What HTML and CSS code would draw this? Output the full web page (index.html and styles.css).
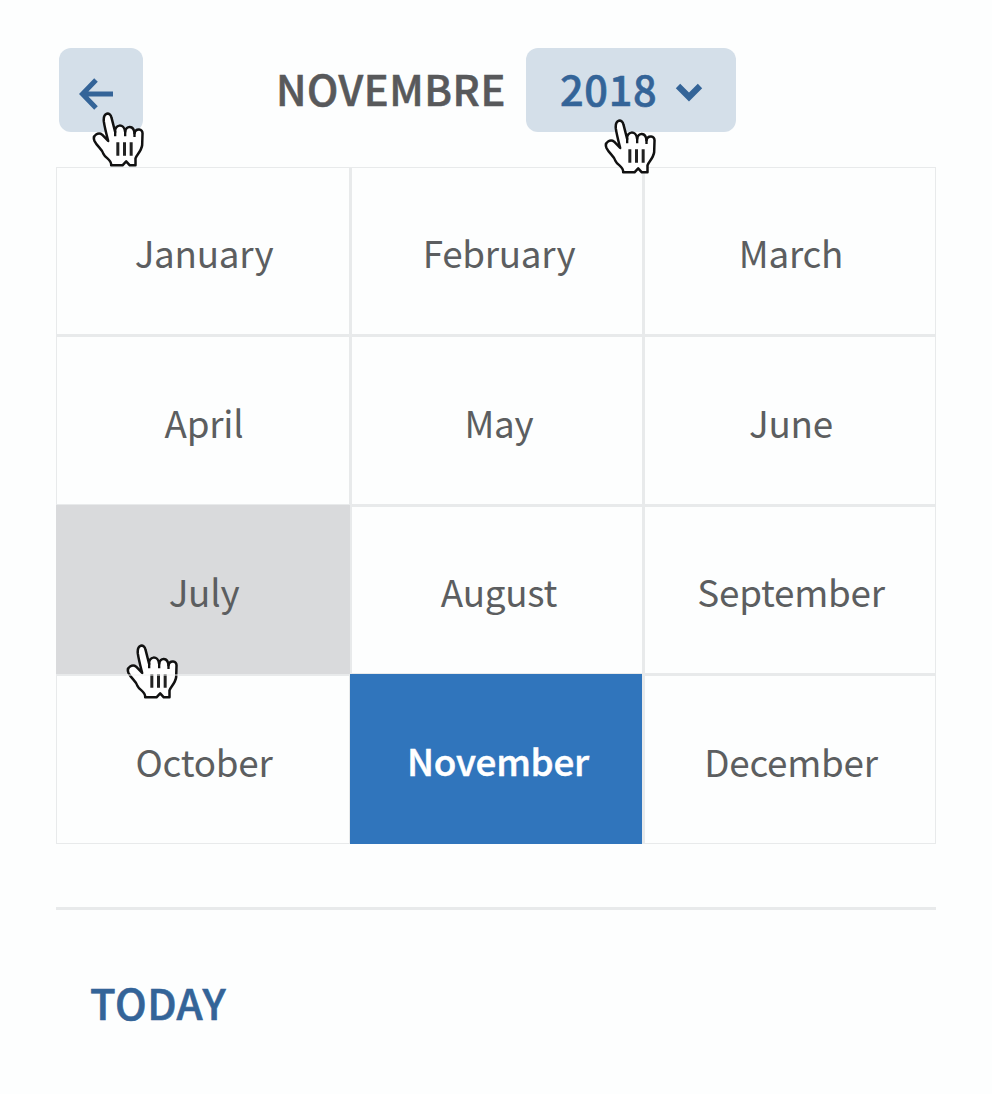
FILE: index.html
```html
<!DOCTYPE html>
<html lang="en">
<head>
<meta charset="utf-8">
<title>Month picker</title>
<link rel="stylesheet" href="styles.css">
</head>
<body>
<svg class="defs" width="0" height="0" aria-hidden="true">
  <symbol id="hand" viewBox="0 0 158 165">
    <path class="hand-shape" d="M48 87 C44 71 38 49 35 29 C32 1 54 -2 58 17 L69 60 C66 37 96 32 99 60 C101 39 125 39 127 64 C130 48 153 48 151 67 L150 99 C148 118 133 128 130 139 L130 160 L113 160 L102 148 L91 160 L57 160 C59 143 40 139 34 126 C30 111 15 104 7 87 C-1 68 20 60 30 68 Z"/>
    <path class="hand-edge" d="M69 58V73M99 58V73M127 62V75"/>
    <path class="hand-lines" d="M77 91V131M97 91V131M117 91V131"/>
  </symbol>
</svg>
<main class="picker">
  <header class="head">
    <button class="chip back" aria-label="Back">
      <svg class="arrow" width="36" height="32" viewBox="0 0 36 32"><path d="M35 16H4M18 2L4.500 16L18 30"/></svg>
      <svg class="hand hand-back"><use href="#hand"/></svg>
    </button>
    <span class="title">NOVEMBRE</span>
    <button class="chip year"><span class="label">2018</span>
      <svg class="chevron" width="28" height="20" viewBox="0 0 28 20"><path d="M3 4L14 15L25 4"/></svg>
      <svg class="hand hand-year"><use href="#hand"/></svg>
    </button>
  </header>
  <section class="grid">
    <div class="cell">January</div>
    <div class="cell mid">February</div>
    <div class="cell">March</div>
    <div class="cell">April</div>
    <div class="cell mid">May</div>
    <div class="cell">June</div>
    <div class="cell hover">July
      <svg class="hand hand-july"><use href="#hand"/><path class="seam" d="M0 31H53"/></svg>
    </div>
    <div class="cell mid">August</div>
    <div class="cell">September</div>
    <div class="cell">October</div>
    <div class="cell selected">November</div>
    <div class="cell">December</div>
  </section>
  <footer class="foot">TODAY</footer>
</main>
</body>
</html>
```
FILE: styles.css
```css
* { box-sizing: border-box; }
body {
  margin: 0;
  background: #fdfefe;
  color: #5c5e60;
  font-family: "Noto Sans CJK SC", "Noto Sans", sans-serif;
}
.defs { position: absolute; }
.picker { width: 992px; height: 1094px; padding: 48px 56px 0; }
.head { display: flex; height: 119px; align-items: flex-start; padding-left: 3px; }
.chip {
  position: relative;
  display: flex;
  align-items: center;
  height: 84px;
  padding: 0;
  border: 0;
  border-radius: 12px;
  background: #d4dfe9;
  color: #346498;
  font: 500 41.5px/80px "Noto Sans CJK SC", "Noto Sans", sans-serif;
}
.back { width: 84px; padding: 8px 0 0 19px; }
.arrow path, .chevron path { fill: none; stroke: #346498; }
.arrow path { stroke-width: 5; }
.chevron path { stroke-width: 6.2; }
.title {
  width: 383px;
  padding-left: 133px;
  font-size: 41.5px;
  line-height: 80px;
  font-weight: 500;
  letter-spacing: 0.6px;
  color: #58595b;
  -webkit-text-stroke: 0.6px currentColor;
}
.year { width: 210px; padding-left: 34px; letter-spacing: 0.7px; }
.label { height: 84px; -webkit-text-stroke: 0.6px currentColor; }
.chevron { margin-left: 18px; margin-top: 3px; }
.hand { position: absolute; z-index: 3; width: 53px; height: 55px; overflow: visible; }
.hand-back { left: 33px; top: 64px; }
.hand-year { left: 78px; top: 71px; }
.hand-july { left: 70px; top: 139px; }
.hand-shape { fill: #fff; stroke: #111; stroke-width: 7.5; stroke-linejoin: round; }
.hand-edge { stroke: #111; stroke-width: 7; }
.hand-lines { stroke: #222; stroke-width: 9; }
.seam { stroke: #f1f2f2; stroke-width: 1; }
.grid {
  display: grid;
  grid-template-columns: 292px 290px 290px;
  grid-template-rows: 166px 167px 166px 167px;
  gap: 3px;
  width: 880px;
  padding: 1px;
  background: #e8eaeb;
}
.cell {
  display: flex;
  align-items: center;
  justify-content: center;
  padding: 2px 0 0 2px;
  background: #fdfefe;
  font-size: 36.8px;
  letter-spacing: -0.25px;
  line-height: 54px;
}
.mid { padding-left: 4px; }
.hover { position: relative; z-index: 1; margin: -2px -1px -1px -1px; background: #d9dadc; }
.selected {
  position: relative;
  margin: -2px 0 -1px -2px;
  padding-left: 4px;
  background: #3075bc;
  color: #fff;
  font-weight: 500;
  -webkit-text-stroke: 0.5px currentColor;
}
.foot {
  margin-top: 63px;
  padding: 61px 0 0 34px;
  border-top: 3px solid #e8eaeb;
  color: #346498;
  font-size: 42px;
  font-weight: 500;
  letter-spacing: 0.5px;
  line-height: 61px;
  -webkit-text-stroke: 0.6px currentColor;
}
```
